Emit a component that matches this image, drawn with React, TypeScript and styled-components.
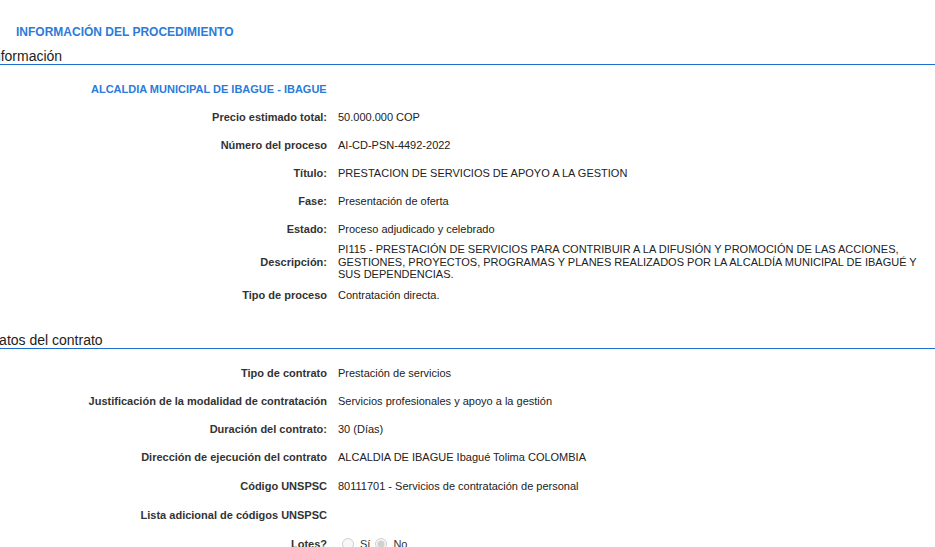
import React from "react";
import styled, { createGlobalStyle } from "styled-components";

const Global = createGlobalStyle`
  html, body { margin: 0; padding: 0; background: #fff; }
  body { font-family: "Liberation Sans", Arial, sans-serif; color: #222; overflow: hidden; }
`;

const Page = styled.div`
  width: 935px;
  padding-top: 25px;
`;

const PageTitle = styled.h1`
  margin: 0 0 9px 16px;
  font-size: 12px;
  line-height: 14px;
  font-weight: bold;
  color: #2b7bd9;
`;

const SectionTitle = styled.h2<{ $first?: boolean }>`
  margin: ${(p) => (p.$first ? "0" : "23px")} 0 10px 0;
  font-size: 14px;
  line-height: 16px;
  font-weight: normal;
  color: #222;
  text-indent: -11px;
  border-bottom: 1px solid #1b6fd0;
  white-space: nowrap;
  overflow: hidden;
`;

const Grid = styled.div`
  display: grid;
  grid-template-columns: 327px 1fr;
  column-gap: 11px;
`;

const Entity = styled.div`
  grid-column: 1 / span 2;
  height: 28px;
  display: flex;
  align-items: center;
  padding-left: 91px;
  font-size: 11px;
  font-weight: bold;
  color: #2b7bd9;
`;

const Label = styled.div<{ $h: number }>`
  min-height: ${(p) => p.$h}px;
  display: flex;
  align-items: center;
  justify-content: flex-end;
  text-align: right;
  font-size: 11px;
  font-weight: bold;
  color: #333;
`;

const Value = styled.div<{ $h: number }>`
  min-height: ${(p) => p.$h}px;
  display: flex;
  align-items: center;
  font-size: 11px;
  line-height: 1.15;
  color: #222;
`;

const RadioGroup = styled.div`
  display: flex;
  align-items: center;
`;

const Radio = styled.input<{ $second?: boolean }>`
  width: 12px;
  height: 12px;
  margin: 0 6px 0 ${(p) => (p.$second ? 5 : 4)}px;
  accent-color: #bbb;
  flex-shrink: 0;
`;

const RadioText = styled.span`
  font-size: 11px;
  color: #333;
`;

type Row = [string, React.ReactNode, number?];

const info: Row[] = [
  ["Precio estimado total:", "50.000.000 COP"],
  ["Número del proceso", "AI-CD-PSN-4492-2022"],
  ["Título:", "PRESTACION DE SERVICIOS DE APOYO A LA GESTION"],
  ["Fase:", "Presentación de oferta"],
  ["Estado:", "Proceso adjudicado y celebrado"],
  [
    "Descripción:",
    "PI115 - PRESTACIÓN DE SERVICIOS PARA CONTRIBUIR A LA DIFUSIÓN Y PROMOCIÓN DE LAS ACCIONES, GESTIONES, PROYECTOS, PROGRAMAS Y PLANES REALIZADOS POR LA ALCALDÍA MUNICIPAL DE IBAGUÉ Y SUS DEPENDENCIAS.",
  ],
  ["Tipo de proceso", "Contratación directa."],
];

const contract: Row[] = [
  ["Tipo de contrato", "Prestación de servicios"],
  ["Justificación de la modalidad de contratación", "Servicios profesionales y apoyo a la gestión"],
  ["Duración del contrato:", "30 (Días)"],
  ["Dirección de ejecución del contrato", "ALCALDIA DE IBAGUE Ibagué Tolima COLOMBIA"],
  ["Código UNSPSC", "80111701 - Servicios de contratación de personal", 30],
  ["Lista adicional de códigos UNSPSC", ""],
  [
    "Lotes?",
    <RadioGroup>
      <Radio type="radio" name="lotes" disabled />
      <RadioText>Sí</RadioText>
      <Radio type="radio" name="lotes" disabled defaultChecked $second />
      <RadioText>No</RadioText>
    </RadioGroup>,
    30,
  ],
];

const Rows = ({ rows }: { rows: Row[] }) => (
  <>
    {rows.map(([l, v, h = 28], i) => (
      <React.Fragment key={i}>
        <Label $h={h}>{l}</Label>
        <Value $h={h}>{v}</Value>
      </React.Fragment>
    ))}
  </>
);

export default function App() {
  return (
    <Page>
      <Global />
      <PageTitle>INFORMACIÓN DEL PROCEDIMIENTO</PageTitle>
      <SectionTitle $first>Información</SectionTitle>
      <Grid>
        <Entity>ALCALDIA MUNICIPAL DE IBAGUE - IBAGUE</Entity>
        <Rows rows={info} />
      </Grid>
      <SectionTitle>Datos del contrato</SectionTitle>
      <Grid>
        <Rows rows={contract} />
      </Grid>
    </Page>
  );
}
